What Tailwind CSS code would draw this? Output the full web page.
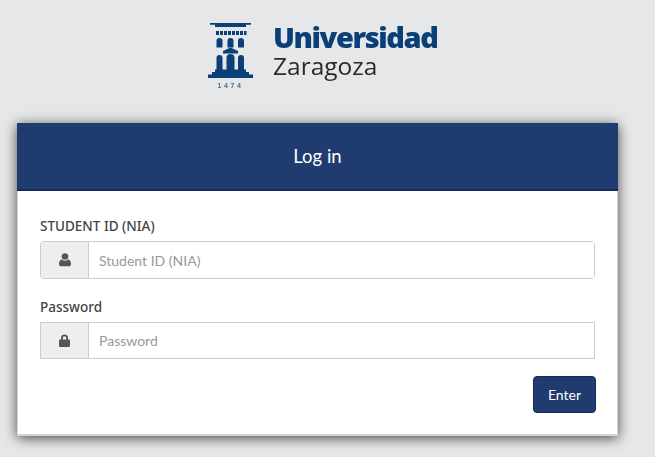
<!DOCTYPE html>
<html lang="en">
  <head>
    <meta charset="UTF-8" />
    <meta name="viewport" content="width=device-width, initial-scale=1.0" />
    <title>Log in</title>
    <script src="https://cdn.jsdelivr.net/npm/@tailwindcss/browser@4"></script>
  </head>
  <body class="h-[457px] overflow-hidden bg-[#e5e7e9] font-['Lato','Open_Sans',sans-serif] text-[#444]">
    <!-- logo -->
    <div class="flex h-[123px] items-start pl-[208px] pt-[23px]">
      <svg class="blur-[0.4px]" width="46" height="67" viewBox="0 0 46 67" fill="#0b3f78">
        <path d="M2 0h41v1.800H38V4H7V1.800H2z" />
        <path d="M8 8h3v4H8zM12 8h3v4h-3zM16 8h3v4h-3zM20 8h3v4h-3zM24 8h3v4h-3zM28 8h3v4h-3zM32 8h3v4h-3zM36 8h2.500v4H36z" />
        <path d="M8.500 18a3 3 0 0 1 6 0v6.500h-6zM19.500 18a3 3 0 0 1 6 0v6.500h-6zM30 18a3 3 0 0 1 6 0v6.500h-6z" />
        <path d="M15 28l7.500-3.500L30 28v2.500H15z" />
        <path d="M8.500 35a3 3 0 0 1 6 0v12h-6zM18.500 35a4 4 0 0 1 8 0v12h-8zM30 35a3 3 0 0 1 6 0v12h-6z" />
        <path d="M7 46.500h31V49H7zM4 49h37v2.500H4zM0 51.500h45V55H0z" />
        <text x="22.500" y="65" text-anchor="middle" font-size="7" font-weight="700" letter-spacing="2.600" fill="#4a7099" font-family="Liberation Sans">1474</text>
      </svg>
      <div class="ml-[19px] flex flex-col blur-[0.4px]">
        <span class="-mt-[1px] font-['Open_Sans'] text-[29px] leading-[29px] font-extrabold tracking-[-1.4px] text-[#0b3f78]">Universidad</span>
        <span class="font-['Open_Sans'] text-[24.500px] leading-[30px] text-[#2b2b2b]">Zaragoza</span>
      </div>
    </div>

    <!-- card -->
    <div class="mx-[17px] w-[601px] bg-white shadow-[0_2px_12px_rgba(0,0,0,0.7)]">
      <div class="flex h-[68px] items-center justify-center border-b-2 border-[#142a55] bg-[#203b70] pt-[2px] text-[18.500px] text-white">Log in</div>
      <form class="border-x border-b-2 border-[#d4d4d4] px-[22px] pt-[25px] pb-[21px]">
        <label class="block h-[25px] font-['Noto_Sans'] text-[13.500px] leading-[20px] font-medium">STUDENT ID (NIA)</label>
        <div class="flex h-[38px] w-[555px] rounded-[4px] border border-[#ccc]">
          <span class="flex w-[48px] items-center justify-center rounded-l-[3px] border-r border-[#ccc] bg-[#eee]">
            <svg width="12" height="14" viewBox="0 0 12 14" fill="#555">
              <circle cx="6" cy="3.500" r="3.300" />
              <path d="M0 11c0-3 1.500-4.500 3-4.500 1 .8 2 1.200 3 1.200s2-.4 3-1.200c1.500 0 3 1.500 3 4.500 0 1.500-1 2.300-2 2.300H2c-1 0-2-.8-2-2.300z" />
            </svg>
          </span>
          <input class="min-w-0 flex-1 rounded-r-[3px] bg-white px-[10px] text-[14px] outline-none placeholder:text-[#999]" placeholder="Student ID (NIA)" />
        </div>
        <label class="mt-[18px] block h-[25px] font-['Noto_Sans'] text-[13.500px] leading-[20px] font-medium">Password</label>
        <div class="flex h-[37px] w-[555px] border border-[#ccc]">
          <span class="flex w-[48px] items-center justify-center border-r border-[#ccc] bg-[#eee]">
            <svg width="11" height="13" viewBox="0 0 11 13" fill="#555">
              <path d="M2 5.500V4a3.500 3.500 0 0 1 7 0v1.500h1a1 1 0 0 1 1 1V12a1 1 0 0 1-1 1H1a1 1 0 0 1-1-1V6.500a1 1 0 0 1 1-1zM3.800 5.500h3.400V4a1.700 1.700 0 0 0-3.400 0z" />
            </svg>
          </span>
          <input type="text" class="min-w-0 flex-1 bg-white px-[10px] text-[14px] outline-none placeholder:text-[#999]" placeholder="Password" />
        </div>
        <div class="mt-[17px] flex w-[556px] justify-end">
          <button type="button" class="h-[37px] w-[63px] rounded-[4px] border border-[#142a55] bg-[#203b70] text-[14px] text-white">Enter</button>
        </div>
      </form>
    </div>
  </body>
</html>
